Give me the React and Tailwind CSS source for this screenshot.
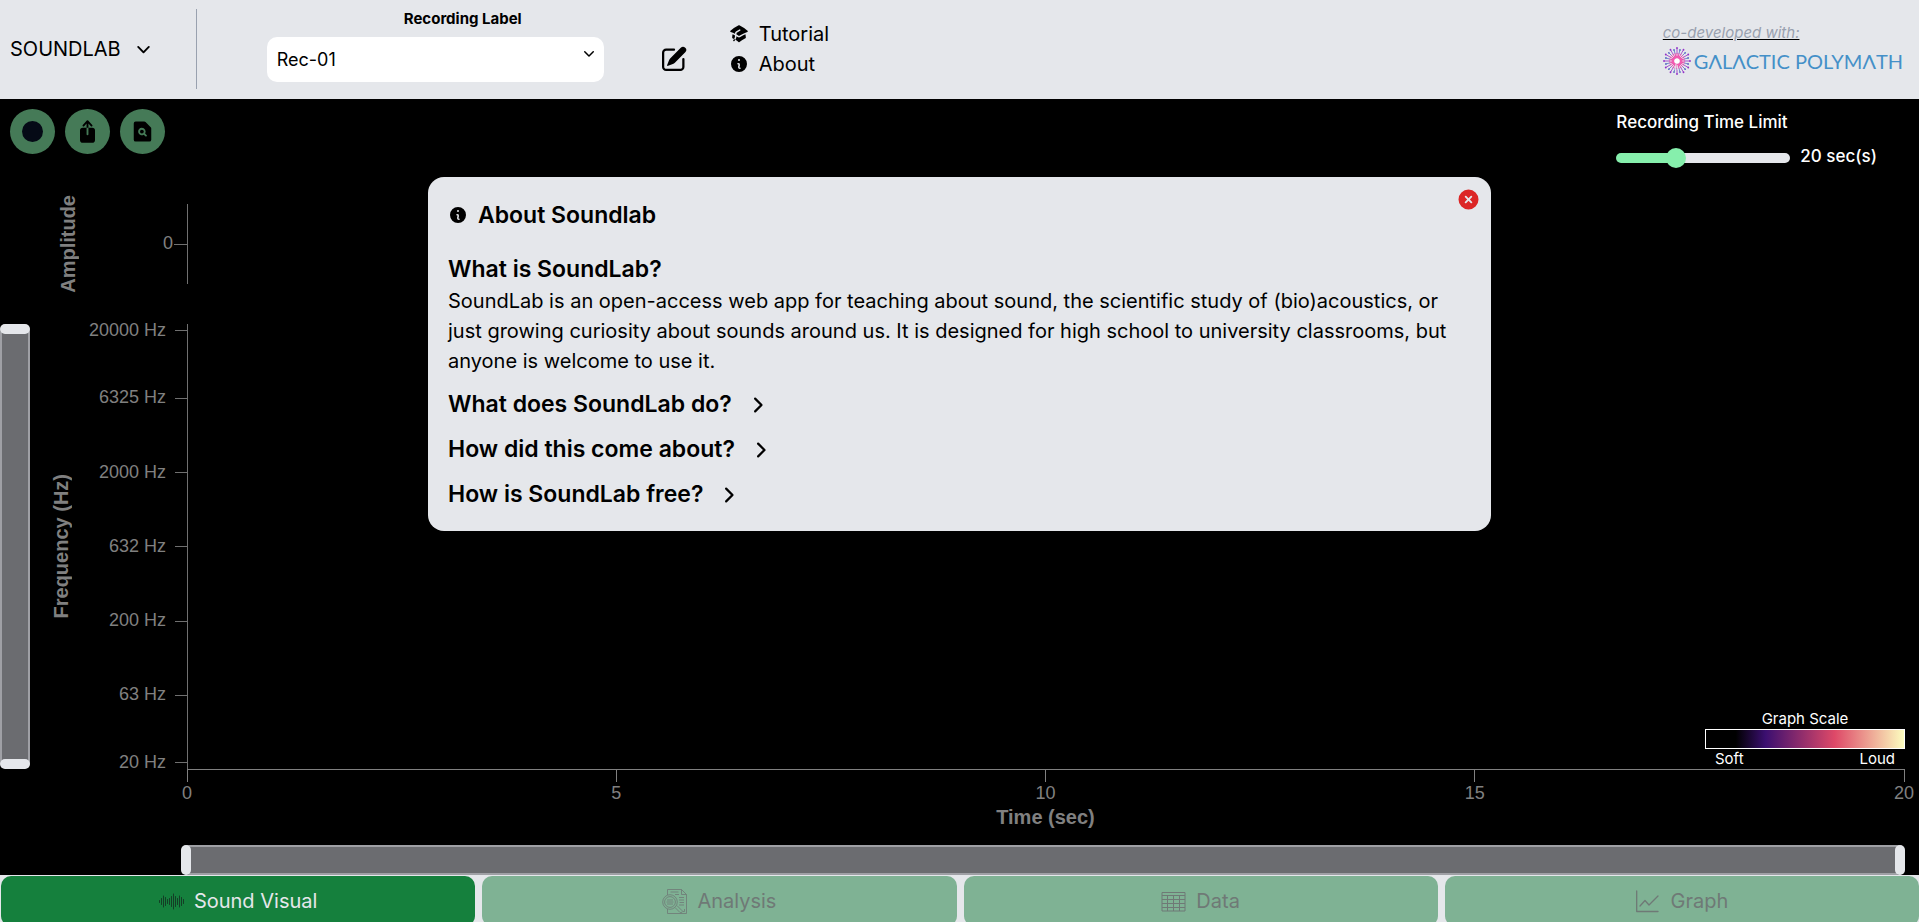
import { useState } from "react";
import * as Slider from "@radix-ui/react-slider";
import {
  HiMiniAcademicCap,
  HiMiniArrowUpOnSquare,
  HiMiniChevronDown,
  HiMiniChevronRight,
  HiMiniDocumentMagnifyingGlass,
  HiMiniInformationCircle,
  HiMiniPencilSquare,
  HiMiniXCircle,
} from "react-icons/hi2";

const FREQUENCIES = [
  { label: "20000 Hz", y: "1.5%" },
  { label: "6325 Hz", y: "16.7%" },
  { label: "2000 Hz", y: "33.4%" },
  { label: "632 Hz", y: "50.1%" },
  { label: "200 Hz", y: "66.8%" },
  { label: "63 Hz", y: "83.4%" },
  { label: "20 Hz", y: "98.6%" },
];

const TIMES = [
  { label: "0", x: "0%" },
  { label: "5", x: "25%" },
  { label: "10", x: "50%" },
  { label: "15", x: "75%" },
  { label: "20", x: "100%" },
];

const AXIS_FONT = "font-['Liberation_Sans',Arial,sans-serif]";

function Sunburst() {
  const rays = Array.from({ length: 24 }, (_, i) => {
    const a = (i * Math.PI) / 12;
    const r = i % 2 ? 11.5 : 13;
    return { c: Math.cos(a), s: Math.sin(a), r, color: i % 2 ? "#5b6fc4" : "#9333c8" };
  });
  return (
    <svg viewBox="-14 -14 28 28" className="size-7 shrink-0" aria-hidden="true">
      {rays.map((p, i) => (
        <g key={i}>
          <line x1={p.c * 7} y1={p.s * 7} x2={p.c * p.r} y2={p.s * p.r} stroke={p.color} strokeWidth="0.8" />
          <circle cx={p.c * p.r} cy={p.s * p.r} r="0.9" fill={p.color} />
          <line x1={p.c * 3} y1={p.s * 3} x2={p.c * 8} y2={p.s * 8} stroke="#ec4fae" strokeWidth="1" />
        </g>
      ))}
      <circle r="4" fill="none" stroke="#f25bb0" strokeWidth="2.4" />
      <circle r="2.6" fill="#fff" />
      <path d="M-1 3 L-2 9 M0 4 L1 9" stroke="#e5e7eb" strokeWidth="1" />
    </svg>
  );
}

function WaveIcon() {
  const bars = [1, 3, 5.5, 4, 2, 3, 5, 7.5, 5, 3, 5.5, 4, 2];
  return (
    <svg viewBox="0 0 25 25" className="size-[25px]" aria-hidden="true">
      {bars.map((h, i) => (
        <line
          key={i}
          x1={0.5 + i * 2}
          x2={0.5 + i * 2}
          y1={12.5 - h}
          y2={12.5 + h}
          stroke="#143d26"
          strokeWidth="1"
          strokeLinecap="round"
        />
      ))}
    </svg>
  );
}

function AnalysisIcon() {
  return (
    <svg viewBox="0 0 25 25" className="size-[25px]" fill="none" stroke="currentColor" strokeWidth="0.8" aria-hidden="true">
      <path d="M5.5 6V.5H19.5l5 5v19h-19V20" />
      <path d="M19.5.5v5h5M8.5 3h8M13 5.5h4M17 8.5h5M17 11h5M17.5 13.5h4.5M17 16h5" />
      <circle cx="8" cy="13" r="7.3" />
      <circle cx="8" cy="13" r="5.4" />
      <path d="M5 11h6M4.5 13h7M5 15h6" />
      <path d="M13 18.5l5 5c1.3 1 3-.5 2-1.9l-5-5M22.5 20v2.500H21" />
    </svg>
  );
}

function TableIcon() {
  return (
    <svg viewBox="0 0 25 25" className="size-[25px]" fill="none" stroke="currentColor" strokeWidth="1" aria-hidden="true">
      <path d="M1 3.5h23v18.500H1zM1 6.5h23M1 10.5h23M1 14.5h23M1 18.5h23M6.500 6.5v15.500M12.500 6.5v15.500M18.500 6.5v15.500" />
    </svg>
  );
}

function GraphIcon() {
  return (
    <svg viewBox="0 0 25 25" className="size-[25px]" fill="none" stroke="currentColor" strokeWidth="1.3" strokeLinecap="round" strokeLinejoin="round" aria-hidden="true">
      <path d="M1.7 2v20.500H23M5 17l5-5.500 4 4.500 9-9" />
    </svg>
  );
}

function RangeBrush({ label, orientation, className }) {
  const vertical = orientation === "vertical";
  return (
    <Slider.Root
      defaultValue={[0, 100]}
      orientation={orientation}
      className={`relative flex touch-none items-center ${vertical ? "w-[30px] flex-col" : "h-[30px]"} ${className}`}
    >
      <Slider.Track
        className={`relative grow rounded-lg border-2 border-[#9fa0a5] bg-[#6b6c70] ${vertical ? "w-full" : "h-full"}`}
      >
        <Slider.Range className="absolute" />
      </Slider.Track>
      {["start", "end"].map((end) => (
        <Slider.Thumb
          key={end}
          aria-label={`${label} ${end}`}
          className={`block rounded-[5px] bg-gray-200 ${vertical ? "h-[10px] w-[30px]" : "h-[30px] w-[10px]"}`}
        />
      ))}
    </Slider.Root>
  );
}

function Header() {
  return (
    <header className="flex h-[99px] shrink-0 items-center bg-gray-200 pr-4 pb-[2px] pl-[10px] text-xl text-black">
      <button type="button" className="flex items-center gap-[10px]">
        SOUNDLAB
        <HiMiniChevronDown className="size-[25px]" />
      </button>
      <div className="ml-10 h-20 w-px bg-gray-400" />
      <div className="ml-[70px] flex w-[392px] flex-col gap-[7px] pb-[7px]">
        <label htmlFor="recording" className="text-center text-[15px] leading-[22px] font-bold">
          Recording Label
        </label>
        <div className="relative w-[337px]">
          <select
            id="recording"
            className="h-[45px] w-full appearance-none rounded-[10px] bg-white px-[10px] text-lg"
            defaultValue="Rec-01"
          >
            <option>Rec-01</option>
          </select>
          <HiMiniChevronDown className="pointer-events-none absolute top-[6px] right-[5px] size-5" />
        </div>
      </div>
      <button type="button" aria-label="Edit label" className="mt-5">
        <HiMiniPencilSquare className="size-[30px]" />
      </button>
      <nav className="ml-10 flex flex-col leading-[30px]">
        <a href="#tutorial" className="flex items-center gap-[10px]">
          <HiMiniAcademicCap className="size-5" />
          Tutorial
        </a>
        <a href="#about" className="flex items-center gap-[10px]">
          <HiMiniInformationCircle className="size-5" />
          About
        </a>
      </nav>
      <a href="#partner" className="ml-auto flex flex-col gap-1">
        <span className="text-[15px] leading-5 text-gray-400 italic underline decoration-black">
          co-developed with:
        </span>
        <span className="flex items-center gap-[3px]">
          <Sunburst />
          <span className="font-['Lato',sans-serif] text-xl leading-7 font-normal text-[#4490c8]">
            GΛLΛCTIC POLYMΛTH
          </span>
        </span>
      </a>
    </header>
  );
}

function Toolbar() {
  const [limit, setLimit] = useState(20);
  const fill = ((limit - 1) / 59) * 100;
  const round = "flex size-[45px] items-center justify-center rounded-full bg-[#457a57] text-black";
  return (
    <div className="flex h-[105px] shrink-0 items-start justify-between pt-[10px] pr-[42px] pl-[10px]">
      <div className="flex gap-[10px]">
        <button type="button" aria-label="Record" className={round}>
          <span className="size-[21px] rounded-full bg-[#050a16]" />
        </button>
        <button type="button" aria-label="Export" className={round}>
          <HiMiniArrowUpOnSquare className="size-[25px]" />
        </button>
        <button type="button" aria-label="Inspect file" className={round}>
          <HiMiniDocumentMagnifyingGlass className="size-[25px]" />
        </button>
      </div>
      <div className="grid grid-cols-[174px_auto] items-center gap-x-[10px] gap-y-2 text-[17px] leading-[26px] font-medium text-white">
        <label htmlFor="limit" className="col-span-2 whitespace-nowrap">
          Recording Time Limit
        </label>
        <input
          id="limit"
          type="range"
          min="1"
          max="60"
          value={limit}
          onChange={(e) => setLimit(Number(e.target.value))}
          style={{ backgroundImage: `linear-gradient(to right, #86efac ${fill}%, #e5e7eb ${fill}%)` }}
          className="mt-1 h-[10px] w-full appearance-none rounded-full [&::-webkit-slider-thumb]:size-5 [&::-webkit-slider-thumb]:appearance-none [&::-webkit-slider-thumb]:rounded-full [&::-webkit-slider-thumb]:bg-[#86efac]"
        />
        <output htmlFor="limit">{limit} sec(s)</output>
      </div>
    </div>
  );
}

function Amplitude() {
  return (
    <div className="flex h-20 shrink-0">
      <div className="flex w-[112px] items-center justify-center pl-6">
        <span className="rotate-180 text-xl leading-6 font-bold whitespace-nowrap text-[#808080] [writing-mode:vertical-rl]">
          Amplitude
        </span>
      </div>
      <svg className="h-full w-[76px]" shapeRendering="crispEdges" stroke="#707070" aria-label="Amplitude axis">
        <line x1="75.5" x2="75.5" y1="0" y2="100%" />
        <line x1="62" x2="75" y1="50%" y2="50%" />
        <text x="61" y="50%" dy="5" textAnchor="end" fontSize="18" stroke="none" fill="#808080">
          0
        </text>
      </svg>
    </div>
  );
}

function Spectrogram() {
  return (
    <div className="relative mt-10 flex min-h-0 flex-1">
      <RangeBrush label="Frequency" orientation="vertical" className="h-full" />
      <div className="flex w-[62px] items-center justify-center">
        <span className="rotate-180 text-xl leading-6 font-bold whitespace-nowrap text-[#808080] [writing-mode:vertical-rl]">
          Frequency (Hz)
        </span>
      </div>
      <svg
        className="h-full w-24 overflow-visible"
        shapeRendering="crispEdges"
        stroke="#707070"
        aria-label="Frequency axis"
      >
        <line x1="95.5" x2="95.5" y1="0" y2="100%" />
        {FREQUENCIES.map((f) => (
          <g key={f.label}>
            <line x1="83" x2="95" y1={f.y} y2={f.y} />
            <text x="74" y={f.y} dy="5" textAnchor="end" fontSize="18" stroke="none" fill="#808080">
              {f.label}
            </text>
          </g>
        ))}
      </svg>
      <div className="absolute right-[14px] bottom-0 w-[200px] font-['Inter',sans-serif] text-[15px] leading-5 text-white">
        <p className="text-center">Graph Scale</p>
        <div className="h-5 border border-white bg-[linear-gradient(to_right,#000_15%,#3b0f70_30%,#de4968_65%,#fcfdbf)]" />
        <div className="flex justify-between px-[10px]">
          <span>Soft</span>
          <span>Loud</span>
        </div>
      </div>
    </div>
  );
}

function TimeAxis() {
  return (
    <svg
      className="mr-[15px] ml-[187px] h-[76px] shrink-0 overflow-visible"
      shapeRendering="crispEdges"
      stroke="#808080"
      aria-label="Time axis"
    >
      <line x1="0" x2="100%" y1="0.5" y2="0.5" />
      {TIMES.map((t) => (
        <g key={t.label}>
          <line x1={t.x} x2={t.x} y1="0" y2="13" />
          <text x={t.x} y="30" textAnchor="middle" fontSize="18" stroke="none" fill="#808080">
            {t.label}
          </text>
        </g>
      ))}
      <text x="50%" y="55" textAnchor="middle" fontSize="20" fontWeight="bold" stroke="none" fill="#808080">
        Time (sec)
      </text>
    </svg>
  );
}

function Tabs() {
  const base = "flex h-[50px] items-center justify-center gap-[10px] rounded-[10px]";
  const off = `${base} bg-[#7fb294] text-[#6f7976]`;
  return (
    <nav className="grid h-[47px] shrink-0 grid-cols-4 gap-[7px] overflow-hidden bg-gray-200 pt-px pl-px text-xl">
      <button type="button" className={`${base} bg-[#15803d] text-gray-200`}>
        <WaveIcon />
        Sound Visual
      </button>
      <button type="button" disabled className={off}>
        <AnalysisIcon />
        Analysis
      </button>
      <button type="button" disabled className={off}>
        <TableIcon />
        Data
      </button>
      <button type="button" disabled className={off}>
        <GraphIcon />
        Graph
      </button>
    </nav>
  );
}

function AboutDialog({ onClose }) {
  const closed = ["What does SoundLab do?", "How did this come about?", "How is SoundLab free?"];
  return (
    <div
      role="dialog"
      aria-labelledby="about-title"
      className="absolute inset-x-0 top-[177px] mx-auto w-[1063px] max-w-full rounded-2xl bg-gray-200 p-5 text-black"
    >
      <button
        type="button"
        aria-label="Close"
        onClick={onClose}
        className="absolute top-[10px] right-[10px] text-[#dc2626]"
      >
        <HiMiniXCircle className="size-[25px]" />
      </button>
      <h2 id="about-title" className="flex items-center gap-[10px] text-[23px] leading-9 font-semibold">
        <HiMiniInformationCircle className="size-5" />
        About Soundlab
      </h2>
      <h3 className="mt-5 text-[23px] leading-[33px] font-semibold">
        <button type="button">What is SoundLab?</button>
      </h3>
      <p className="text-xl leading-[30px]">
        SoundLab is an open-access web app for teaching about sound, the scientific study of (bio)acoustics, or just
        growing curiosity about sounds around us. It is designed for high school to university classrooms, but anyone is
        welcome to use it.
      </p>
      <div className="mt-3 flex flex-col gap-3">
        {closed.map((q) => (
          <h3 key={q} className="text-[23px] leading-[33px] font-semibold">
            <button type="button" className="flex items-center gap-[10px]">
              {q}
              <HiMiniChevronRight className="size-[30px]" />
            </button>
          </h3>
        ))}
      </div>
    </div>
  );
}

export default function App() {
  const [open, setOpen] = useState(true);
  return (
    <div className="relative flex h-screen flex-col overflow-hidden bg-black font-['Inter',sans-serif]">
      <Header />
      <Toolbar />
      <main className={`flex min-h-0 flex-1 flex-col ${AXIS_FONT}`}>
        <Amplitude />
        <Spectrogram />
        <TimeAxis />
        <RangeBrush label="Time" orientation="horizontal" className="mr-[14px] ml-[181px] shrink-0" />
      </main>
      <Tabs />
      {open && <AboutDialog onClose={() => setOpen(false)} />}
    </div>
  );
}
